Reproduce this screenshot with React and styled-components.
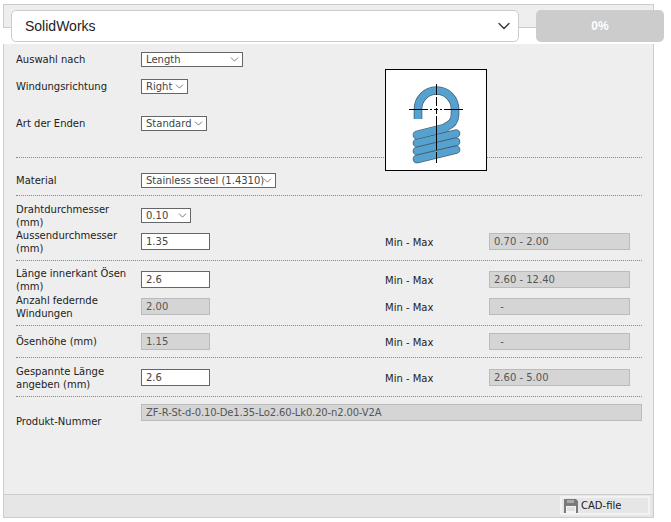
import React from "react";
import styled, { createGlobalStyle } from "styled-components";
import { ChevronDown } from "lucide-react";

const GlobalStyle = createGlobalStyle`
    html, body {
        margin: 0;
        background: #fff;
    }
    body {
        font-family: "DejaVu Sans", Verdana, sans-serif;
        font-size: 10px;
        color: #222;
    }
`;

const Page = styled.div`
    width: 671px;
    height: 522px;
    padding: 4px 0 0 3px;
    box-sizing: border-box;
`;

const Header = styled.div`
    position: relative;
    width: 651px;
    height: 40px;
    padding: 6px 0 0 8px;
    box-sizing: border-box;
    display: flex;
    gap: 17px;
    &::before {
        content: "";
        position: absolute;
        inset: 0 0 16px 0;
        box-sizing: border-box;
        background: #eee;
        border: 1px solid #ccc;
    }
`;

const SystemSelect = styled.div`
    position: relative;
    flex: none;
    width: 508px;
    height: 32px;
    box-sizing: border-box;
    padding: 0 4px 0 13px;
    display: flex;
    align-items: center;
    justify-content: space-between;
    background: #fff;
    border: 1px solid #ccc;
    border-radius: 5px;
    font-family: "Liberation Sans", Arial, sans-serif;
    font-size: 14px;
    color: #222;
`;

const Progress = styled.div`
    position: relative;
    flex: none;
    width: 128px;
    height: 32px;
    display: flex;
    align-items: center;
    justify-content: center;
    background: #ccc;
    border-radius: 5px;
    font-family: "Liberation Sans", Arial, sans-serif;
    font-weight: bold;
    font-size: 12px;
    color: #fff;
`;

const Body = styled.div`
    position: relative;
    width: 651px;
    height: 450px;
    box-sizing: border-box;
    padding: 0 11px 0 12px;
    background: #eee;
    border-left: 1px solid #ccc;
    border-right: 1px solid #ccc;
`;

const Section = styled.section`
    height: ${(p) => p.$height}px;
    padding-top: ${(p) => p.$top || 0}px;
    box-sizing: border-box;
    border-bottom: ${(p) => (p.$last ? "none" : "1px dotted #888")};
`;

const Row = styled.div`
    display: grid;
    grid-template-columns: 125px 244px 104px 1fr;
    height: ${(p) => p.$height}px;
    align-items: ${(p) => (p.$start ? "start" : "center")};
`;

const Label = styled.label`
    display: block;
    max-width: 118px;
    line-height: 12.5px;
    margin-top: ${(p) => p.$offset ?? 2}px;
`;

const MinMaxLabel = styled.span`
    margin-top: 2px;
`;

const SelectBox = styled.div`
    position: relative;
    width: ${(p) => p.$width}px;
    height: 15px;
    svg {
        position: absolute;
        top: 1px;
        right: 2px;
        pointer-events: none;
    }
`;

const Select = styled.select`
    display: block;
    width: 100%;
    height: 100%;
    box-sizing: border-box;
    padding: 0 0 0 4px;
    appearance: none;
    background: #fff;
    border: 1px solid #666;
    border-radius: 0;
    font-family: inherit;
    font-size: 10px;
    color: #444;
`;

const Input = styled.input`
    display: block;
    width: ${(p) => p.$width || 69}px;
    height: 17px;
    box-sizing: border-box;
    padding: 0 4px;
    background: ${(p) => (p.readOnly ? "#d5d5d5" : "#fff")};
    border: 1px solid ${(p) => (p.readOnly ? "#bbb" : "#666")};
    border-radius: 0;
    font-family: inherit;
    font-size: 10px;
    letter-spacing: ${(p) => (p.$tight ? "-0.15px" : "0")};
    color: ${(p) => (p.readOnly ? "#555" : "#444")};
    outline: none;
`;

const Wide = styled.div`
    grid-column: 2 / -1;
`;

const Preview = styled.div`
    position: absolute;
    left: 381px;
    top: 25px;
    width: 102px;
    height: 102px;
    box-sizing: border-box;
    background: #fff;
    border: 1px solid #000;
`;

const Footer = styled.div`
    width: 651px;
    height: 24px;
    box-sizing: border-box;
    padding: 1px 3px 0 0;
    display: flex;
    justify-content: flex-end;
    background: #e6e6e6;
    border: 1px solid #ccc;
`;

const CadButton = styled.button`
    width: 90px;
    height: 19px;
    box-sizing: border-box;
    padding: 0 0 0 2px;
    display: flex;
    align-items: center;
    gap: 3px;
    background: #e6e6e6;
    border: 2px solid #f2f2f2;
    font-family: inherit;
    font-size: 10px;
    color: #222;
`;

function SpringDrawing() {
    const hook = "M33 50 V40 A18.5 18.5 0 0 1 70 40 V46 C70 52 66 56 60 58.5";
    const tail = "M32 66 L60 59";
    const coils = [
        "M32 90 L71 80.6",
        "M32 81.9 L71 72.7",
        "M32 73.9 L71 64.6",
        tail,
    ];
    return (
        <svg width="100" height="100" viewBox="1 1 100 100" style={{ display: "block" }}>
            {coils.map((d) => (
                <g key={d} strokeLinecap="round" fill="none">
                    <path d={d} stroke="#46606f" strokeWidth="8.6" />
                    <path d={d} stroke="#55a2d0" strokeWidth="7" />
                </g>
            ))}
            <path d={hook} fill="none" stroke="#46606f" strokeWidth="8.6" />
            <path d={tail} fill="none" stroke="#55a2d0" strokeWidth="7" strokeLinecap="round" />
            <path d={hook} fill="none" stroke="#55a2d0" strokeWidth="7" />
            <path d="M51.5 15 V96" stroke="#000" strokeWidth="1" strokeDasharray="11 2 9 2 6 2 34 2 11" />
            <path d="M24 40.5 H78" stroke="#000" strokeWidth="1" strokeDasharray="19 2 2 2 4 2 2 2 19" />
        </svg>
    );
}

function FloppyIcon() {
    return (
        <svg width="14" height="14" viewBox="0 0 14 14">
            <path d="M0 0 H12 L14 2 V14 H0 Z" fill="#7a7a7a" />
            <rect x="3" y="1" width="7" height="3" fill="#aaa" />
            <rect x="2" y="7" width="10" height="7" fill="#f4f4f4" />
            <path d="M3 9 H11 M3 11 H11" stroke="#ccc" strokeWidth="1" />
        </svg>
    );
}

function Dropdown({ width, value }) {
    return (
        <SelectBox $width={width}>
            <Select defaultValue={value}><option>{value}</option></Select>
            <ChevronDown size={13} strokeWidth={1.8} color="#777" />
        </SelectBox>
    );
}

function MinMax({ value }) {
    return (
        <>
            <MinMaxLabel>Min - Max</MinMaxLabel>
            <Input $width={141} readOnly value={value} />
        </>
    );
}

export default function App() {
    return (
        <Page>
            <GlobalStyle />
            <Header>
                <SystemSelect>
                    SolidWorks
                    <ChevronDown size={20} strokeWidth={1.6} color="#333" />
                </SystemSelect>
                <Progress>0%</Progress>
            </Header>
            <Body>
                <Preview>
                    <SpringDrawing />
                </Preview>
                <Section $height={114} $top={2}>
                    <Row $height={27}>
                        <Label>Auswahl nach</Label>
                        <Dropdown width={102} value="Length" />
                    </Row>
                    <Row $height={27}>
                        <Label>Windungsrichtung</Label>
                        <Dropdown width={47} value="Right" />
                    </Row>
                    <Row $height={47}>
                        <Label>Art der Enden</Label>
                        <Dropdown width={66} value="Standard" />
                    </Row>
                </Section>
                <Section $height={38} $top={7}>
                    <Row $height={30}>
                        <Label>Material</Label>
                        <Dropdown width={135} value="Stainless steel (1.4310)" />
                    </Row>
                </Section>
                <Section $height={65} $top={6}>
                    <Row $height={26}>
                        <Label>Drahtdurchmesser (mm)</Label>
                        <Dropdown width={50} value="0.10" />
                    </Row>
                    <Row $height={25}>
                        <Label>Aussendurchmesser (mm)</Label>
                        <Input defaultValue="1.35" />
                        <MinMax value="0.70 - 2.00" />
                    </Row>
                </Section>
                <Section $height={65} $top={5}>
                    <Row $height={27}>
                        <Label>Länge innerkant Ösen (mm)</Label>
                        <Input defaultValue="2.6" />
                        <MinMax value="2.60 - 12.40" />
                    </Row>
                    <Row $height={25}>
                        <Label>Anzahl federnde Windungen</Label>
                        <Input readOnly value="2.00" />
                        <MinMax value="  -" />
                    </Row>
                </Section>
                <Section $height={32} $top={3}>
                    <Row $height={25}>
                        <Label>Ösenhöhe (mm)</Label>
                        <Input readOnly value="1.15" />
                        <MinMax value="  -" />
                    </Row>
                </Section>
                <Section $height={39} $top={6}>
                    <Row $height={25}>
                        <Label>Gespannte Länge angeben (mm)</Label>
                        <Input defaultValue="2.6" />
                        <MinMax value="2.60 - 5.00" />
                    </Row>
                </Section>
                <Section $height={97} $top={7} $last>
                    <Row $height={30} $start>
                        <Label $offset={12}>Produkt-Nummer</Label>
                        <Wide>
                            <Input $width={501} $tight readOnly value="ZF-R-St-d-0.10-De1.35-Lo2.60-Lk0.20-n2.00-V2A" />
                        </Wide>
                    </Row>
                </Section>
            </Body>
            <Footer>
                <CadButton>
                    <FloppyIcon />
                    CAD-file
                </CadButton>
            </Footer>
        </Page>
    );
}
